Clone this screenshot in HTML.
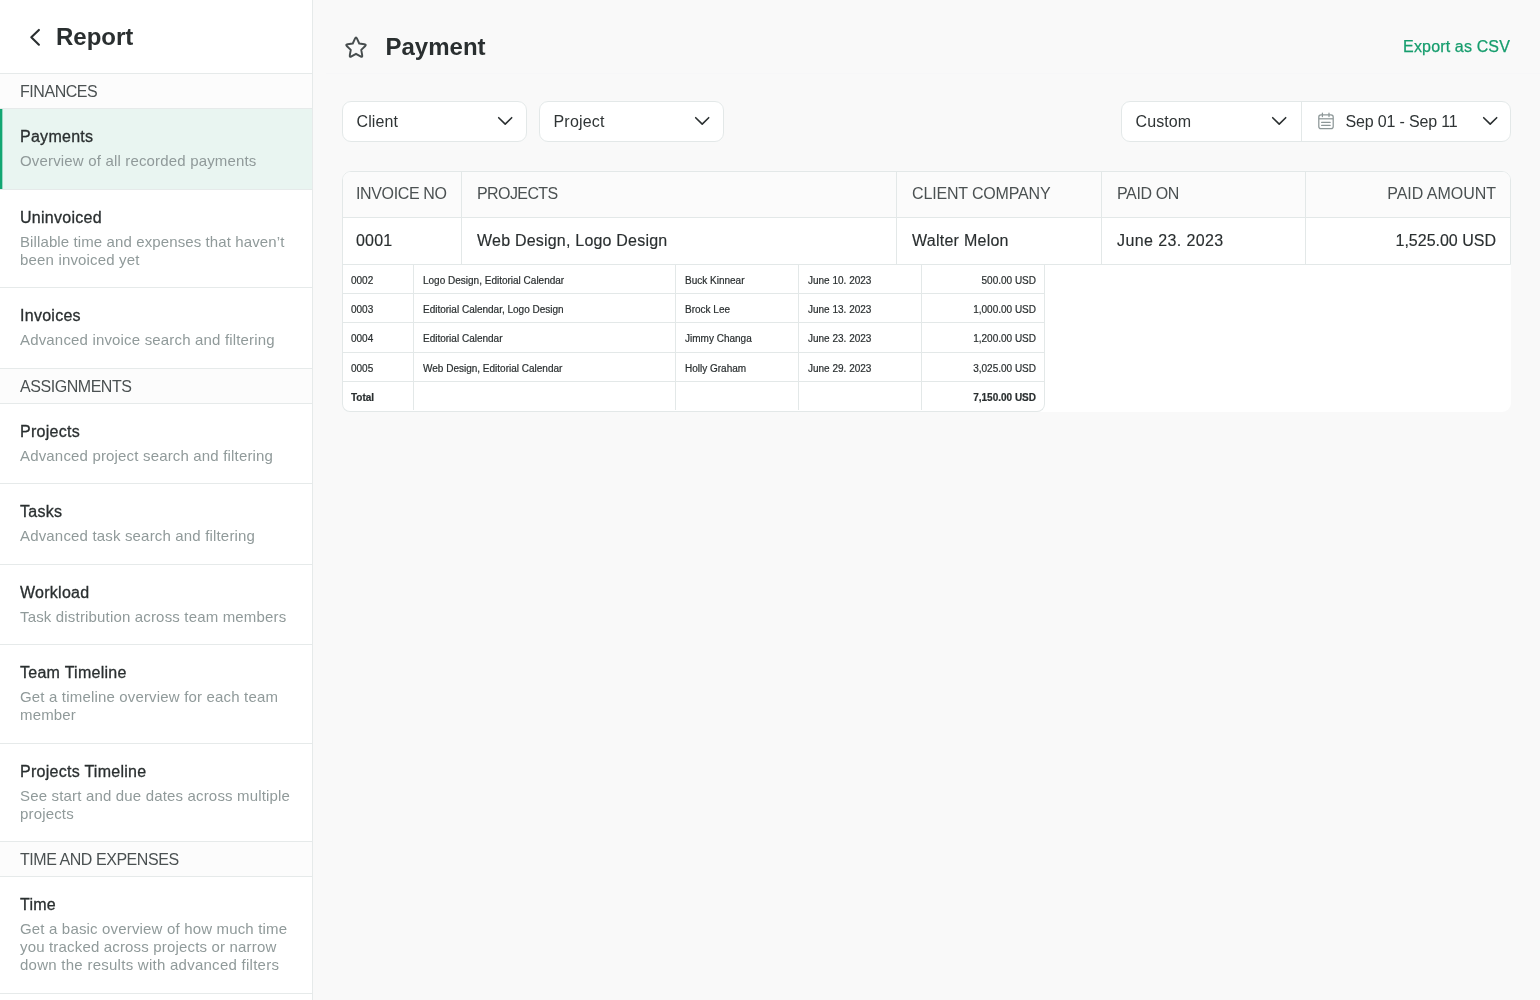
<!DOCTYPE html>
<html><head><meta charset="utf-8">
<style>
*{box-sizing:border-box;margin:0;padding:0}
html,body{width:1540px;height:1000px;overflow:hidden}
.side,.main{will-change:transform}
body{font-family:"Liberation Sans",sans-serif;background:#f9f9f9;color:#2b3030;position:relative}
.side{position:absolute;left:0;top:0;width:313px;height:1000px;background:#fff;border-right:1px solid #e6eaea;overflow:hidden}
.shead{height:74.2px;border-bottom:1px solid #e6eaea;position:relative}
.shead svg{position:absolute;left:28px;top:27px}
.shead h1{position:absolute;left:56px;top:22px;font-size:24px;line-height:30px;font-weight:700;color:#2a2f30;letter-spacing:0}
.sec{height:35px;background:#fcfcfc;border-bottom:1px solid #e6eaea;padding-left:20px;font-size:16px;line-height:35px;color:#4b5152;letter-spacing:-0.45px}
.item{border-bottom:1px solid #e6eaea;padding:18px 0 0 20px;position:relative;height:80.5px;white-space:nowrap}
.item.l2{height:98.5px}.item.l3{height:116.5px}
.item .t{font-size:16px;line-height:20px;font-weight:400;color:#2a2f30;-webkit-text-stroke:0.3px #2a2f30;letter-spacing:0.27px}
.item .d{font-size:15px;line-height:18px;color:#909a9a;margin-top:5px;letter-spacing:0.17px}
.item.act{background:#e9f5f1}
.item.act:before{content:"";position:absolute;left:0;top:0;bottom:0;width:2px;background:#12a672;box-shadow:1px 0 0 rgba(18,166,114,.35)}
.main{position:absolute;left:312px;top:0;right:0;height:1000px}

.main h2{position:absolute;left:73.5px;top:32px;font-size:24px;line-height:30px;font-weight:700;color:#2a2f30}
.star{position:absolute;left:31px;top:34px}
.export{position:absolute;right:30px;top:37px;font-size:16px;line-height:20px;color:#169d6d;-webkit-text-stroke:0.25px #169d6d;letter-spacing:0.15px}
.hline{position:absolute;left:14px;right:0;top:73px;height:1px;background:#f7f7f8}
.dd{position:absolute;top:101px;height:41px;background:#fff;border:1px solid #e3e8e8;border-radius:9px;font-size:16px;line-height:39px;color:#2f3435}
.dd .lbl{position:absolute;left:13.5px;top:0px;white-space:nowrap;letter-spacing:0.1px}
.dd svg.chev{position:absolute;top:14.3px}
.tbl{position:absolute;left:30px;top:171px;width:1169px;height:240.5px;background:#fff;border-radius:9px}
.big{position:absolute;left:0;top:0;width:1169px;height:93.5px;border:1px solid #e3e8e8;border-radius:9px 9px 0 0;overflow:hidden}
.big .hr{position:absolute;left:0;right:0;top:0;height:45.5px;background:#fbfbfb;border-bottom:1px solid #e3e8e8}
.big .r1{position:absolute;left:0;right:0;top:45.5px;height:46px}
.big .c{position:absolute;top:0;bottom:0;border-left:1px solid #e3e8e8;padding-left:15px;white-space:nowrap}
.big .c.first{border-left:none;padding-left:13px}
.big .c.r{text-align:right;padding-right:14px}
.hr .c{font-size:16px;line-height:44.5px;color:#4b5152;letter-spacing:-0.37px}
.r1 .c{font-size:16px;line-height:46px;color:#2a2f30;-webkit-text-stroke:0.15px #2a2f30}
.small{position:absolute;left:0;top:92.5px;width:703px;height:148px;border:1px solid #e3e8e8;border-top:none;border-radius:0 0 8px 8px}
.small .row{position:absolute;left:0;right:0;height:29.4px;border-top:1px solid #e3e8e8;font-size:10px;line-height:32.5px;color:#2a2f30;-webkit-text-stroke:0.2px #2a2f30}
.small .row .c{position:absolute;top:0;bottom:0;border-left:1px solid #e3e8e8;padding-left:9px;white-space:nowrap}
.small .row .c.first{border-left:none;padding-left:8px}
.small .row .c.r{text-align:right;padding-right:9px}
.small .row.tot{font-weight:700}
</style></head><body>
<div class="side">
 <div class="shead">
  <svg width="14" height="20" viewBox="0 0 14 20"><path d="M10.9 2.9 L3.3 10.3 L10.9 17.7" fill="none" stroke="#2a2f30" stroke-width="2.1" stroke-linecap="round" stroke-linejoin="round"/></svg>
  <h1>Report</h1>
 </div>
 <div class="sec">FINANCES</div>
 <div class="item act"><div class="t">Payments</div><div class="d">Overview of all recorded payments</div></div>
 <div class="item l2"><div class="t">Uninvoiced</div><div class="d"><span style="letter-spacing:0.11px">Billable time and expenses that haven’t</span><br>been invoiced yet</div></div>
 <div class="item"><div class="t">Invoices</div><div class="d">Advanced invoice search and filtering</div></div>
 <div class="sec">ASSIGNMENTS</div>
 <div class="item"><div class="t">Projects</div><div class="d">Advanced project search and filtering</div></div>
 <div class="item"><div class="t">Tasks</div><div class="d">Advanced task search and filtering</div></div>
 <div class="item"><div class="t">Workload</div><div class="d">Task distribution across team members</div></div>
 <div class="item l2"><div class="t">Team Timeline</div><div class="d">Get a timeline overview for each team<br>member</div></div>
 <div class="item l2"><div class="t">Projects Timeline</div><div class="d">See start and due dates across multiple<br>projects</div></div>
 <div class="sec">TIME AND EXPENSES</div>
 <div class="item l3"><div class="t">Time</div><div class="d">Get a basic overview of how much time<br>you tracked across projects or narrow<br><span style="letter-spacing:0.26px">down the results with advanced filters</span></div></div>
</div>
<div class="main">
 <svg class="star" width="26" height="26" viewBox="0 0 26 26"><path d="M11.98 4.77 Q13.00 2.60 14.02 4.77 L16.23 9.45 L21.37 10.10 Q23.75 10.41 22.00 12.05 L18.23 15.60 L19.19 20.68 Q19.64 23.04 17.54 21.89 L13.00 19.40 L8.46 21.89 Q6.36 23.04 6.81 20.68 L7.77 15.60 L4.00 12.05 Q2.25 10.41 4.63 10.10 L9.77 9.45 Z" fill="none" stroke="#474d4e" stroke-width="1.95" stroke-linejoin="round" transform="translate(0,14.1) scale(1,1.04) translate(0,-13.9)"/></svg>
 <h2>Payment</h2>
 <div class="export">Export as CSV</div>
 <div class="hline"></div>
 <div class="dd" style="left:30px;width:185px"><span class="lbl">Client</span><svg class="chev" style="left:154px" width="16" height="10" viewBox="0 0 16 10"><path d="M1.7 1.7 L8.2 8.1 L14.7 1.7" fill="none" stroke="#2a2f30" stroke-width="1.6" stroke-linecap="round" stroke-linejoin="round"/></svg></div>
 <div class="dd" style="left:227px;width:185px"><span class="lbl" style="letter-spacing:0.2px">Project</span><svg class="chev" style="left:154px" width="16" height="10" viewBox="0 0 16 10"><path d="M1.7 1.7 L8.2 8.1 L14.7 1.7" fill="none" stroke="#2a2f30" stroke-width="1.6" stroke-linecap="round" stroke-linejoin="round"/></svg></div>
 <div class="dd" style="left:809px;width:390px">
   <span class="lbl">Custom</span>
   <svg class="chev" style="left:149px" width="16" height="10" viewBox="0 0 16 10"><path d="M1.7 1.7 L8.2 8.1 L14.7 1.7" fill="none" stroke="#2a2f30" stroke-width="1.6" stroke-linecap="round" stroke-linejoin="round"/></svg>
   <div style="position:absolute;left:179px;top:0;bottom:0;width:1px;background:#e3e8e8"></div>
   <svg style="position:absolute;left:195px;top:10px" width="18" height="18" viewBox="0 0 18 18" fill="none" stroke="#8d9798" stroke-width="1.25" stroke-linecap="round"><rect x="1.8" y="2.8" width="14.4" height="13.8" rx="2.2"/><path d="M5.4 1.2 V4.6 M12 1.2 V4.6"/><path d="M1.8 6.8 H16.2" stroke-linecap="butt"/><path d="M4.6 10.4 H13.2 M4.6 13.4 H13.2" stroke-width="1.1"/></svg>
   <span class="lbl" style="left:223.5px;letter-spacing:-0.16px">Sep 01 - Sep 11</span>
   <svg class="chev" style="left:359.5px" width="16" height="10" viewBox="0 0 16 10"><path d="M1.7 1.7 L8.2 8.1 L14.7 1.7" fill="none" stroke="#2a2f30" stroke-width="1.6" stroke-linecap="round" stroke-linejoin="round"/></svg>
 </div>
 <div class="tbl">
  <div class="small">
   <div class="row" style="top:0;border-top:none;line-height:33.6px"><div class="c first" style="left:0;width:71px">0002</div><div class="c" style="left:70px;width:262px">Logo Design, Editorial Calendar</div><div class="c" style="left:332px;width:123px">Buck Kinnear</div><div class="c" style="left:455px;width:123px">June 10. 2023</div><div class="c r" style="left:578px;width:124px">500.00 USD</div></div>
   <div class="row" style="top:29.4px"><div class="c first" style="left:0;width:71px">0003</div><div class="c" style="left:70px;width:262px">Editorial Calendar, Logo Design</div><div class="c" style="left:332px;width:123px">Brock Lee</div><div class="c" style="left:455px;width:123px">June 13. 2023</div><div class="c r" style="left:578px;width:124px">1,000.00 USD</div></div>
   <div class="row" style="top:58.8px"><div class="c first" style="left:0;width:71px">0004</div><div class="c" style="left:70px;width:262px">Editorial Calendar</div><div class="c" style="left:332px;width:123px">Jimmy Changa</div><div class="c" style="left:455px;width:123px">June 23. 2023</div><div class="c r" style="left:578px;width:124px">1,200.00 USD</div></div>
   <div class="row" style="top:88.2px"><div class="c first" style="left:0;width:71px">0005</div><div class="c" style="left:70px;width:262px">Web Design, Editorial Calendar</div><div class="c" style="left:332px;width:123px">Holly Graham</div><div class="c" style="left:455px;width:123px">June 29. 2023</div><div class="c r" style="left:578px;width:124px">3,025.00 USD</div></div>
   <div class="row tot" style="top:117.6px"><div class="c first" style="left:0;width:71px">Total</div><div class="c" style="left:70px;width:262px"></div><div class="c" style="left:332px;width:123px"></div><div class="c" style="left:455px;width:123px"></div><div class="c r" style="left:578px;width:124px">7,150.00 USD</div></div>
  </div>
  <div class="big">
   <div class="hr"><div class="c first" style="left:0;width:119px">INVOICE NO</div><div class="c" style="left:118px;width:435px"><span style="letter-spacing:-0.59px">PROJECTS</span></div><div class="c" style="left:553px;width:205px"><span style="letter-spacing:-0.16px">CLIENT COMPANY</span></div><div class="c" style="left:758px;width:205px">PAID ON</div><div class="c r" style="left:962px;width:205px"><span style="letter-spacing:-0.02px">PAID AMOUNT</span></div></div>
   <div class="r1"><div class="c first" style="left:0;width:119px"><span style="letter-spacing:0.2px">0001</span></div><div class="c" style="left:118px;width:435px"><span style="letter-spacing:0.21px">Web Design, Logo Design</span></div><div class="c" style="left:553px;width:205px"><span style="letter-spacing:0.26px">Walter Melon</span></div><div class="c" style="left:758px;width:205px"><span style="letter-spacing:0.4px">June 23. 2023</span></div><div class="c r" style="left:962px;width:205px">1,525.00 USD</div></div>
  </div>
 </div>
</div>
</body></html>
